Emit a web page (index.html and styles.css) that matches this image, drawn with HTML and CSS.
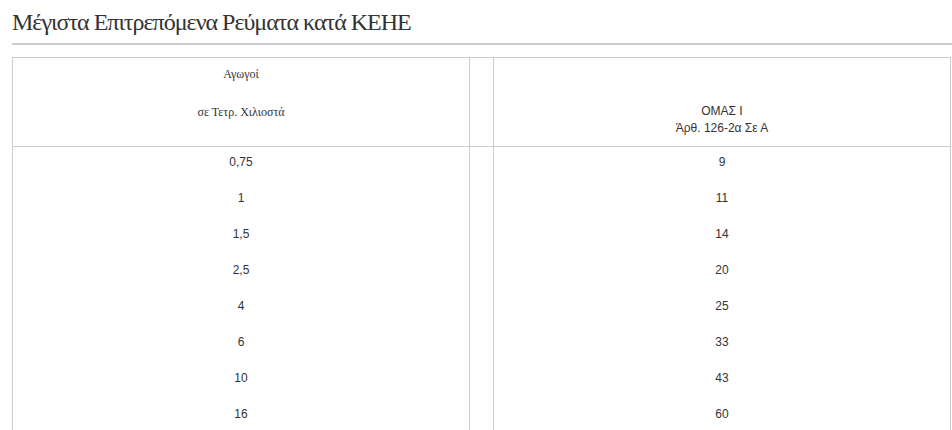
FILE: index.html
```html
<!DOCTYPE html>
<html lang="el">
<head>
  <meta charset="UTF-8">
  <meta name="viewport" content="width=device-width, initial-scale=1.0">
  <title>Μέγιστα Επιτρεπόμενα Ρεύματα κατά ΚΕΗΕ</title>
  <link rel="stylesheet" href="styles.css">
</head>
<body>
  <div class="page">
    <h1 class="page-title">Μέγιστα Επιτρεπόμενα Ρεύματα κατά ΚΕΗΕ</h1>

    <table class="current-table">
      <thead>
        <tr>
          <th class="col-size">
            <p>Αγωγοί</p>
            <p>σε Τετρ. Χιλιοστά</p>
          </th>
          <th class="col-gap"></th>
          <th class="col-group">ΟΜΑΣ Ι<br>Άρθ. 126-2α Σε Α</th>
        </tr>
      </thead>
      <tbody>
        <tr><td>0,75</td><td></td><td>9</td></tr>
        <tr><td>1</td><td></td><td>11</td></tr>
        <tr><td>1,5</td><td></td><td>14</td></tr>
        <tr><td>2,5</td><td></td><td>20</td></tr>
        <tr><td>4</td><td></td><td>25</td></tr>
        <tr><td>6</td><td></td><td>33</td></tr>
        <tr><td>10</td><td></td><td>43</td></tr>
        <tr><td>16</td><td></td><td>60</td></tr>
      </tbody>
    </table>
  </div>
</body>
</html>
```

FILE: styles.css
```css
/* Page */
body {
  margin: 0;
  background: #fff;
  color: #333;
  font-family: "Liberation Sans", Arial, sans-serif;
  font-size: 12px;
}

.page {
  padding-left: 12px;
}

.page-title {
  margin: 0;
  padding: 10px 0 9px;
  font-family: "Liberation Serif", "Times New Roman", serif;
  font-size: 24px;
  font-weight: normal;
  line-height: 24px;
  letter-spacing: -1px;
  color: #333;
  border-bottom: 2px solid #ccc;
}

/* Table */
.current-table {
  width: 939px;
  margin-top: 12px;
  border-collapse: collapse;
  border: 1px solid #ccc;
}

.current-table th,
.current-table td {
  text-align: center;
  font-weight: normal;
  line-height: 17px;
}

.current-table thead th {
  height: 89px;
  padding: 0 8px 9px;
  border: 1px solid #ccc;
  vertical-align: bottom;
  box-sizing: border-box;
}

.current-table .col-size {
  width: 457px;
  vertical-align: top;
  padding-top: 8px;
  font-family: "Liberation Serif", "Times New Roman", serif;
}

.col-size p {
  margin: 0 0 21px;
}

.col-size p:last-child {
  margin-bottom: 0;
}

.current-table .col-gap {
  width: 24px;
  padding: 0;
}

.current-table td {
  padding: 7px 8px 12px;
  border-left: 1px solid #ccc;
  border-right: 1px solid #ccc;
}
```
